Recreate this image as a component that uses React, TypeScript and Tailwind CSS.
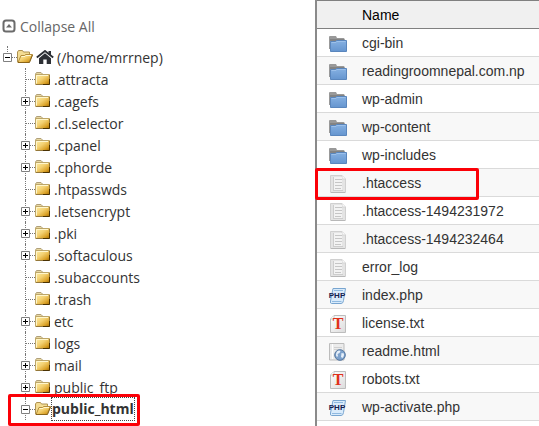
type TreeNode = {
	name: string
	expandable?: boolean
	open?: boolean
}

type FileKind = "folder" | "file" | "php" | "text" | "html"

type FileRow = {
	name: string
	kind: FileKind
	highlighted?: boolean
}

const tree: TreeNode[] = [
	{ name: ".attracta" },
	{ name: ".cagefs", expandable: true },
	{ name: ".cl.selector" },
	{ name: ".cpanel", expandable: true },
	{ name: ".cphorde", expandable: true },
	{ name: ".htpasswds" },
	{ name: ".letsencrypt", expandable: true },
	{ name: ".pki", expandable: true },
	{ name: ".softaculous", expandable: true },
	{ name: ".subaccounts" },
	{ name: ".trash" },
	{ name: "etc", expandable: true },
	{ name: "logs" },
	{ name: "mail", expandable: true },
	{ name: "public_ftp", expandable: true },
	{ name: "public_html", expandable: true, open: true }
]

const files: FileRow[] = [
	{ name: "cgi-bin", kind: "folder" },
	{ name: "readingroomnepal.com.np", kind: "folder" },
	{ name: "wp-admin", kind: "folder" },
	{ name: "wp-content", kind: "folder" },
	{ name: "wp-includes", kind: "folder" },
	{ name: ".htaccess", kind: "file", highlighted: true },
	{ name: ".htaccess-1494231972", kind: "file" },
	{ name: ".htaccess-1494232464", kind: "file" },
	{ name: "error_log", kind: "file" },
	{ name: "index.php", kind: "php" },
	{ name: "license.txt", kind: "text" },
	{ name: "readme.html", kind: "html" },
	{ name: "robots.txt", kind: "text" },
	{ name: "wp-activate.php", kind: "php" }
]

const Gradients = () => (
	<svg width="0" height="0" className="absolute" aria-hidden="true">
		<defs>
			<linearGradient id="gold" x1="0" y1="0" x2="1" y2="1">
				<stop offset="0" stopColor="#fff0a8" />
				<stop offset="0.45" stopColor="#f3d071" />
				<stop offset="0.75" stopColor="#dca52c" />
				<stop offset="1" stopColor="#a86c00" />
			</linearGradient>
			<linearGradient id="blue" x1="0" y1="0" x2="0" y2="1">
				<stop offset="0" stopColor="#86b1e2" />
				<stop offset="1" stopColor="#6595cf" />
			</linearGradient>
			<linearGradient id="paper" x1="0" y1="0" x2="1" y2="1">
				<stop offset="0" stopColor="#ffffff" />
				<stop offset="1" stopColor="#dcdcdc" />
			</linearGradient>
		</defs>
	</svg>
)

const ClosedFolder = () => (
	<svg width="16" height="14" viewBox="0 0 16 14" className="shrink-0" aria-hidden="true">
		<path d="M.5 11.5V2L1.5.5H6L7.5 2v1" fill="#e9d9a2" stroke="#b0a07a" />
		<path d="M.5 2.5H14.5v10H.5z" fill="url(#gold)" stroke="#bda668" />
		<path d="M1.5 11.5v-8H13" fill="none" stroke="#fff6cc" />
		<path d="M14.5 7v5.5H8" fill="none" stroke="#4a3203" />
		<path d="M14.5 3v4M1 12.5h7" fill="none" stroke="#94773a" />
	</svg>
)

const OpenFolder = () => (
	<svg width="16" height="14" viewBox="0 0 16 14" className="shrink-0" aria-hidden="true">
		<path d="M.5 12V2L1.5.5h4l1 1.5h6v4L10 12z" fill="#f3dc93" stroke="#ae9150" />
		<path d="M4 5.5h3.5l1-1h7l-3.5 8H1z" fill="url(#gold)" stroke="#b38d3b" />
		<path d="M1 12.5h11.5L15.5 5" fill="none" stroke="#8a6418" />
		<path d="M4.5 6.5H8l1-1h5" fill="none" stroke="#fff7cf" />
	</svg>
)

const HomeIcon = () => (
	<svg width="18" height="14" viewBox="0 0 18 14" className="shrink-0" aria-hidden="true">
		<path d="M.8 7.6 9 1l8.2 6.6" fill="none" stroke="#2d3035" strokeWidth="1.9" />
		<path d="M12.5 1h2.5v4.5l-2.5-2z" fill="#2d3035" />
		<path d="M9 3.3 15 8.2V14h-4.3V9.500H7.3V14H3V8.2z" fill="#2d3035" />
	</svg>
)

const CollapseIcon = () => (
	<svg width="14" height="14" viewBox="0 0 14 14" aria-hidden="true">
		<rect x="1.5" y="1.5" width="11" height="11" rx="2.5" fill="#fff" stroke="#6b6b6b" strokeWidth="2" />
		<path d="M4 8.5 7 5l3 3.5z" fill="#6b6b6b" />
	</svg>
)

const BlueFolder = () => (
	<svg width="18" height="16" viewBox="0 0 18 16" aria-hidden="true">
		<path d="M0 13V1Q0 0 1 0h6l1 2h6.5q1 0 1 1v10z" fill="#999" />
		<path d="M1 3h14.500v2H1z" fill="#838383" />
		<path d="M1.500 5.5h5l1-1h10v11h-16z" fill="url(#blue)" stroke="#5a86bd" />
		<path d="M2.500 6.500h4.500l1-1h8.500" fill="none" stroke="#9cc0ea" />
	</svg>
)

const FileIcon = () => (
	<svg width="16" height="18" viewBox="0 0 16 18" aria-hidden="true">
		<path d="M.5.5h11.5l3.5 3.5v13.500H.5z" fill="#e4e4e4" stroke="#d0d0d0" />
		<path d="M12 .5V4h3.5" fill="#fafafa" stroke="#d4d4d4" />
		<path d="M1 17.5h14" stroke="#b8b8b8" />
		<path d="M4 2h8v13H4z" fill="#f3f3f3" />
		<path d="M5 4.5h7M5 7.5h7M5 10.5h7M5 13.5h6" stroke="#c6c6c6" />
		<path d="M3.5 2v13M3 15.5h10" stroke="#cdcdcd" />
	</svg>
)

const PhpIcon = () => (
	<svg width="16" height="16" viewBox="0 0 16 16" className="overflow-visible" aria-hidden="true">
		<path d="M3 .5h12.5l-2 12q-.3 3-2.5 3H1.5Q0 15.5.5 13z" fill="#d9ebfb" stroke="#78a5d0" />
		<path d="M2 13.5h9.5M4 2.5h9" stroke="#8fb9e0" />
		<text x="7" y="10" textAnchor="middle" fontFamily="Liberation Sans, sans-serif" fontSize="8" fontWeight="700" fill="#14204e">
			PHP
		</text>
	</svg>
)

const TextIcon = () => (
	<svg width="16" height="18" viewBox="0 0 16 18" aria-hidden="true">
		<path d="M4 .5h11.5v17H.5V4z" fill="url(#paper)" stroke="#bdbdbd" />
		<path d="M.5 4H4V.5" fill="#fff" stroke="#c8c8c8" />
		<text x="8" y="14" textAnchor="middle" fontFamily="Liberation Serif, serif" fontSize="16" fontWeight="700" fill="#e0301a">
			T
		</text>
	</svg>
)

const HtmlIcon = () => (
	<svg width="17" height="18" viewBox="0 0 17 18" aria-hidden="true">
		<path d="M.5.5h14.5v16.500H.5z" fill="#ececec" stroke="#bcbcbc" />
		<path d="M3.5 1v15" stroke="#fff" />
		<path d="M5 4.5h8M5 6.5h5" stroke="#d0d0d0" />
		<circle cx="11" cy="12" r="5.3" fill="#7ea2cc" stroke="#56779f" />
		<path d="M8 8.5q2-1.500 3.500-.5l-1 2-2 1 .5 2-1 1q-2-2 0-5.500zM12.500 10l2.500.5q.5 2-1.500 4.500l-1.500-1z" fill="#e7f0fa" />
	</svg>
)

const fileIcons = {
	folder: <BlueFolder />,
	file: <FileIcon />,
	php: <PhpIcon />,
	text: <TextIcon />,
	html: <HtmlIcon />
}

const Toggle = ({ open, label }: { open?: boolean; label: string }) => (
	<button
		type="button"
		aria-label={`${open ? "Collapse" : "Expand"} ${label}`}
		aria-expanded={!!open}
		className="relative size-[9px] shrink-0 bg-white"
	>
		<svg width="9" height="9" viewBox="0 0 9 9" className="block">
			<path d="M.5.5h8v8h-8z" fill="#fff" stroke="#808080" />
			<path d={open ? "M2 4.5h5" : "M2 4.5h5M4.5 2v5"} stroke="#000" />
		</svg>
	</button>
)

const TreeItem = ({ node }: { node: TreeNode }) => (
	<div className="relative flex h-[22px] items-center">
		<div className="relative flex h-full w-[14px] shrink-0 items-center">
			<span className="absolute inset-y-0 left-1 border-l border-dotted border-[#777]" />
			{node.expandable && <Toggle open={node.open} label={node.name} />}
			<span className={`grow border-t border-dotted border-[#777] ${node.expandable ? "" : "ml-1"}`} />
		</div>
		{node.open ? <OpenFolder /> : <ClosedFolder />}
		{node.open ? (
			<a href="#" className="z-10 border border-dotted border-[#444] bg-white font-bold leading-[22px]">
				{node.name}
			</a>
		) : (
			<a href="#" className="ml-[3px]">
				{node.name}
			</a>
		)}
		{node.open && (
			<span className="pointer-events-none absolute -left-[13px] -right-[5px] -top-1 z-20 h-8 rounded-xs border-3 border-[#fb0007]" />
		)}
	</div>
)

const DirectoryTree = () => (
	<nav className="w-[315px] shrink-0 pl-[3px] pt-[15px] font-['Open_Sans',sans-serif] text-[14px] text-[#333]">
		<button type="button" className="-ml-px flex h-[22px] items-center gap-1 text-[#666]">
			<CollapseIcon />
			Collapse All
		</button>
		<ul className="pt-[9px]">
			<li>
				<div className="flex h-[22px] items-center">
					<div className="relative flex h-full w-[14px] shrink-0 items-center">
						<span className="absolute left-1 top-0 h-2 border-l border-dotted border-[#777]" />
						<Toggle open label="home" />
						<span className="grow border-t border-dotted border-[#777]" />
					</div>
					<OpenFolder />
					<a href="#" className="ml-[3px] flex items-center gap-[3px]">
						<HomeIcon />
						(/home/mrrnep)
					</a>
				</div>
				<ul className="pl-[18px]">
					{tree.map(node => (
						<li key={node.name} className="w-max">
							<TreeItem node={node} />
						</li>
					))}
					<li className="flex h-[22px] items-center pl-8">
						<ClosedFolder />
					</li>
				</ul>
			</li>
		</ul>
	</nav>
)

const FileTable = () => (
	<div className="min-w-0 grow border-l-2 border-[#8a8a8a] font-['Liberation_Sans',sans-serif] text-[14px] text-[#333]">
		<table className="w-full border-separate border-spacing-0 text-left">
			<thead>
				<tr className="h-[29px] bg-[#f0f0f0] text-black">
					<th className="w-[45px] border-y border-[#808080]" aria-label="Type" />
					<th className="border-y border-[#808080] p-0 pt-0.5 font-normal">Name</th>
				</tr>
			</thead>
			<tbody>
				{files.map(file => (
					<tr key={file.name} className="relative h-[28px] even:bg-[#f8f8f8]">
						<td className="border-b border-[#dadada] p-0 pt-0.5">
							<div className="flex w-[41px] justify-center">{fileIcons[file.kind]}</div>
							{file.highlighted && (
								<span className="pointer-events-none absolute -left-[2px] -top-px h-8 w-[164px] rounded-xs border-3 border-[#fb0007]" />
							)}
						</td>
						<td className="border-b border-[#dadada] p-0 pt-0.5">{file.name}</td>
					</tr>
				))}
			</tbody>
		</table>
	</div>
)

const App = () => {
	return (
		<div className="flex h-screen overflow-hidden bg-white">
			<Gradients />
			<DirectoryTree />
			<FileTable />
		</div>
	)
}

export default App
